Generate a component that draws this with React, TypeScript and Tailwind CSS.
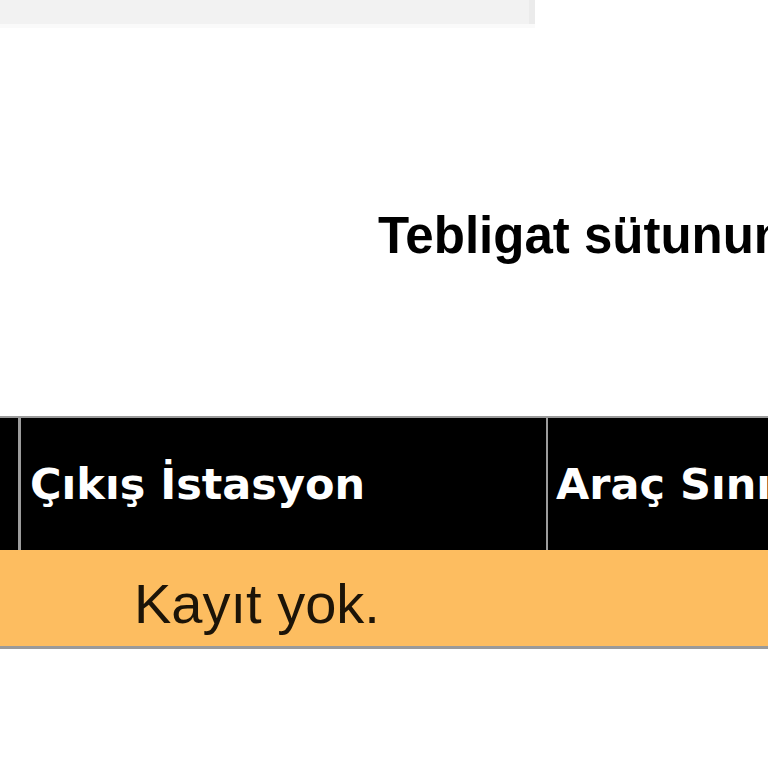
import React from "react";

export default function App() {
  return (
    <div className="w-[768px] h-[768px] overflow-hidden bg-white relative">
      <div className="h-[24px] w-[535px] bg-[#f2f2f2] border-r-[6px] border-[#ebebeb]" />
      <div className="h-[4px] w-[535px] bg-[#fafafa]" />
      <div
        className="mt-[182px] pl-[378px] whitespace-nowrap text-[51px] leading-none font-bold text-black"
        style={{ fontFamily: '"Liberation Sans", Arial, sans-serif' }}
      >
        Tebligat sütununa tıklayınız
      </div>
      <div className="mt-[155px] w-[1100px] border-t-[2px] border-b-[3px] border-[#9a9a9a]">
        <div
          className="flex h-[132px] bg-black text-white font-bold text-[43px] leading-none whitespace-nowrap"
          style={{ fontFamily: '"DejaVu Sans", Verdana, sans-serif' }}
        >
          <div className="w-[21px] shrink-0 border-r-[3px] border-[#9c9c9c]" />
          <div className="w-[527px] shrink-0 flex items-center pl-[9px] border-r-[2px] border-[#9c9c9c]">
            Çıkış İstasyon
          </div>
          <div className="flex-1 flex items-center pl-[8px]">Araç Sınıfı</div>
        </div>
        <div
          className="h-[96px] bg-[#fdbd60] flex items-center pt-[12px] pl-[134px] text-[56px] leading-none text-[#1c1408] whitespace-nowrap"
          style={{ fontFamily: '"Liberation Sans", Arial, sans-serif' }}
        >
          Kayıt yok.
        </div>
      </div>
    </div>
  );
}
